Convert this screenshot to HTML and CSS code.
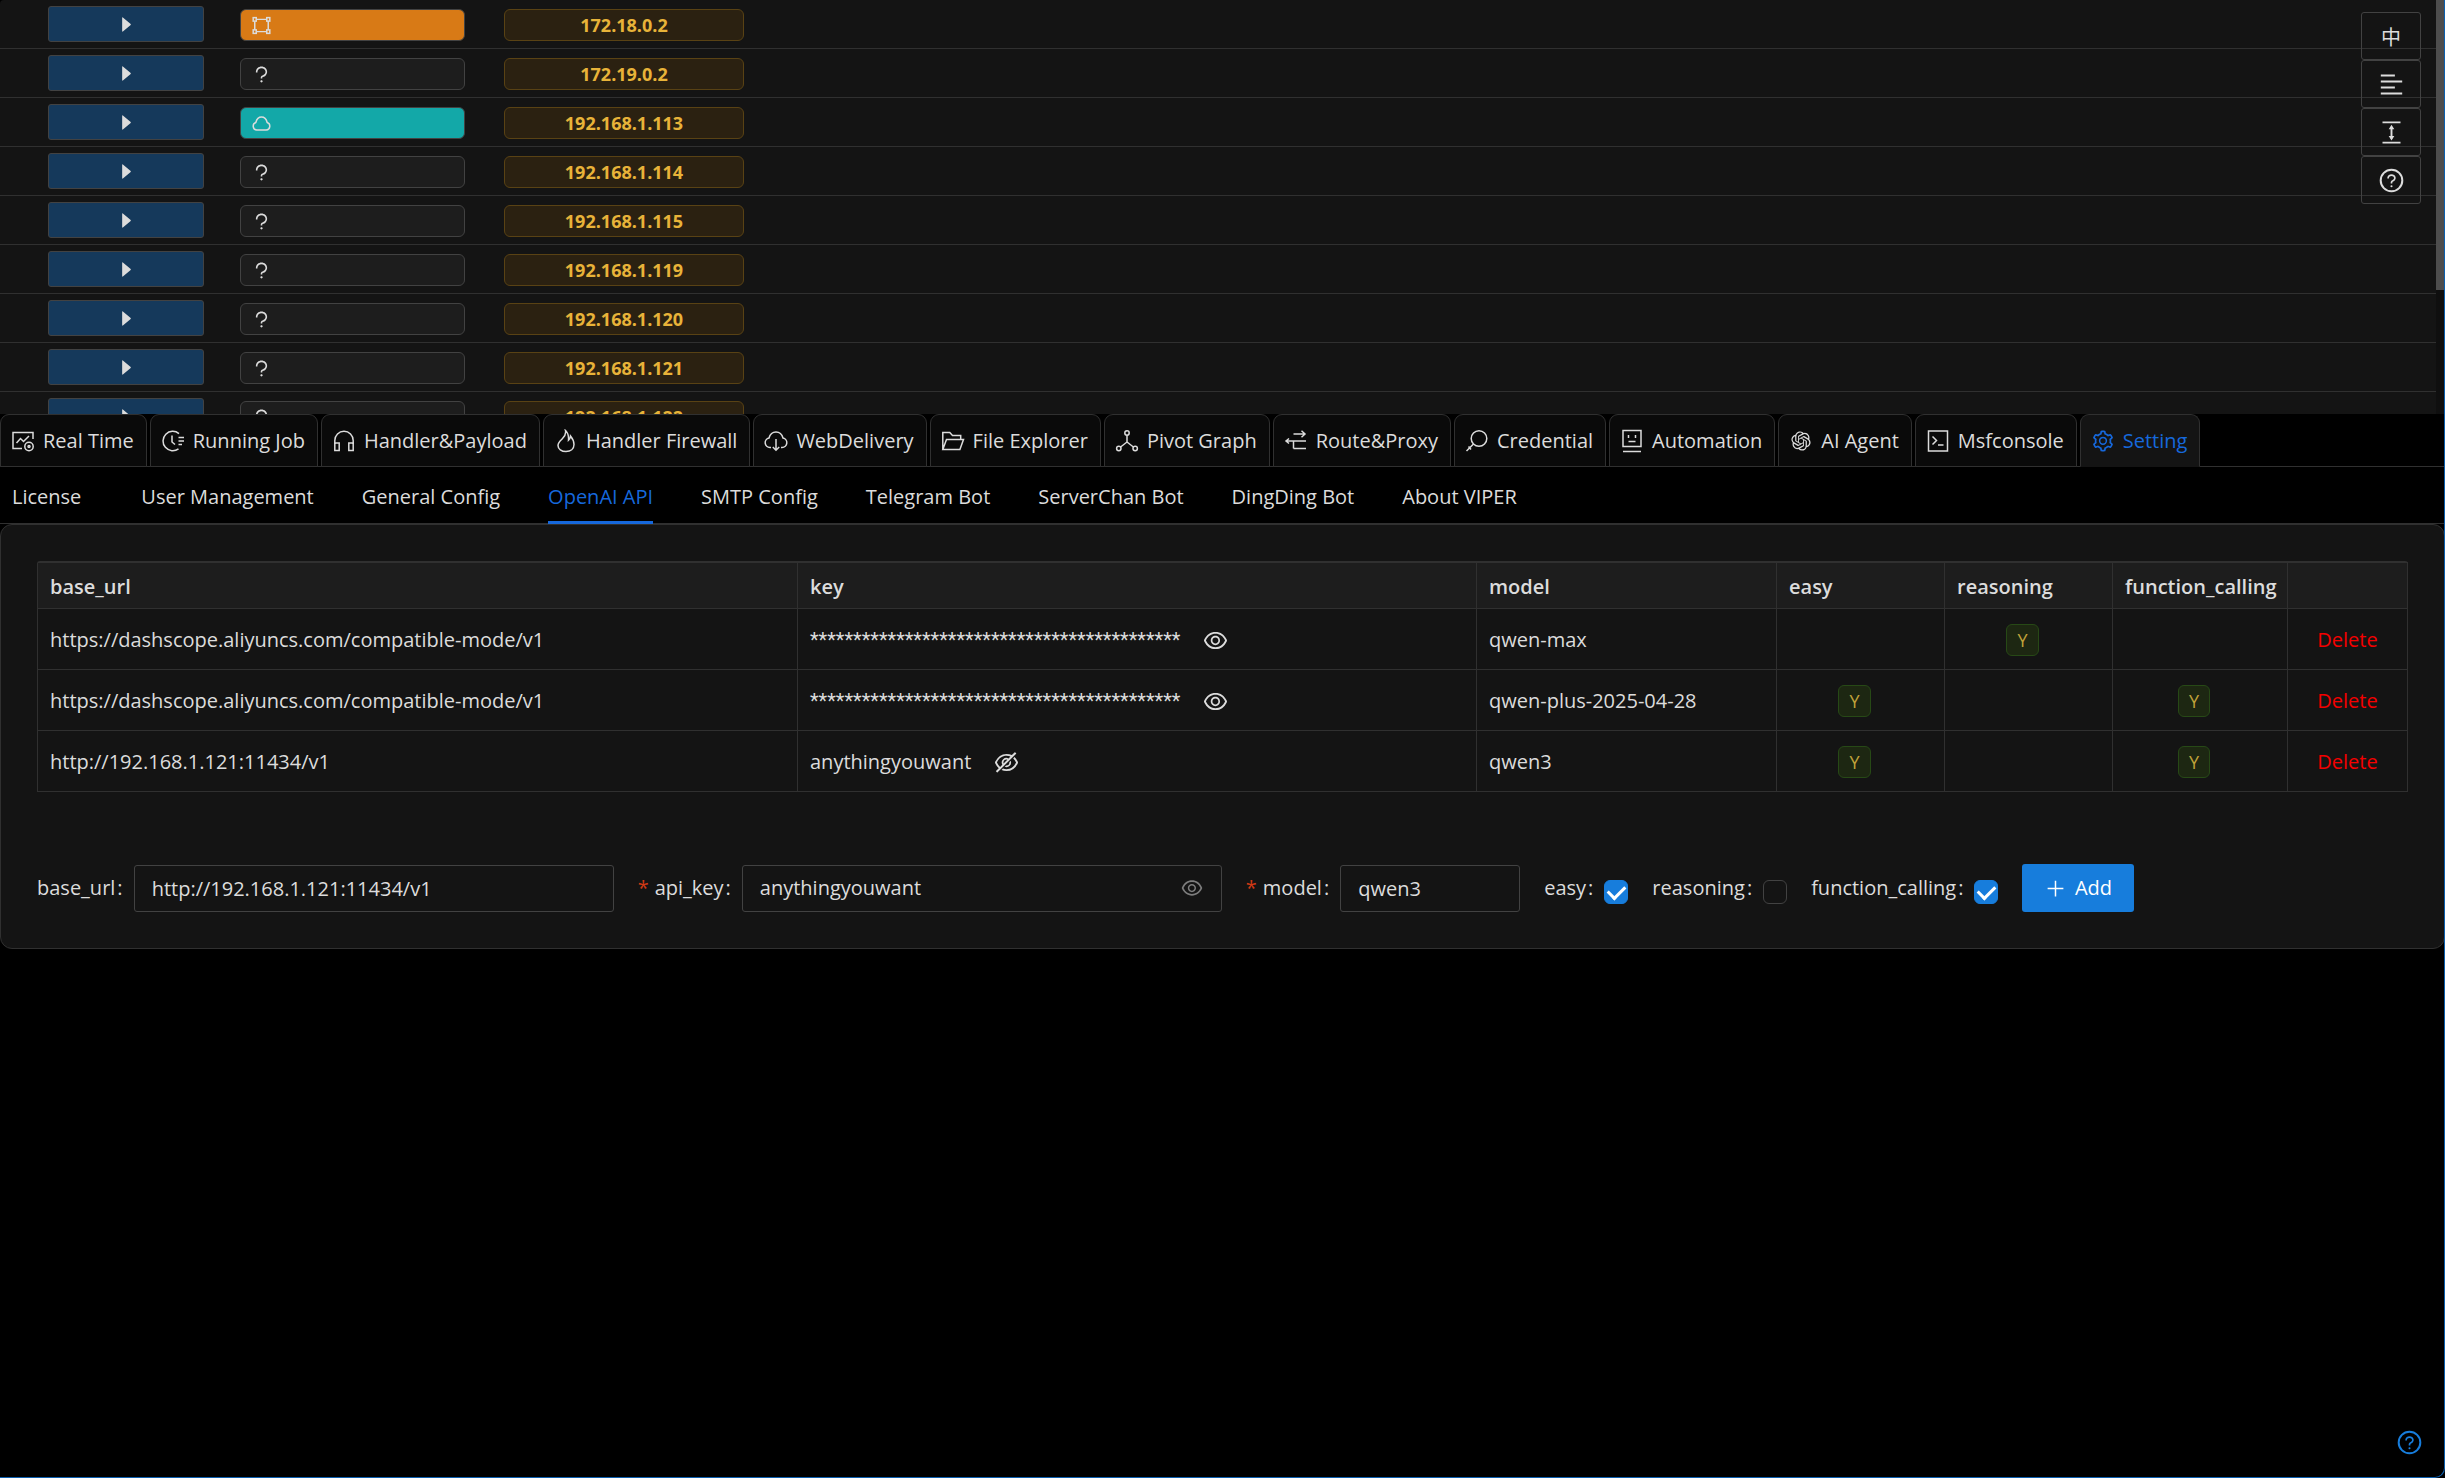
FILE: index.html
```html
<!DOCTYPE html>
<html lang="en">
<head>
<meta charset="utf-8">
<title>VIPER</title>
<link rel="stylesheet" href="styles.css">
</head>
<body>
<svg class="sprite" aria-hidden="true">
  <symbol id="i-caret" viewBox="0 0 1024 1024"><path fill="currentColor" stroke="none" d="M715.8 493.500L335 165.100c-14.200-12.200-35-1.200-35 18.500v656.800c0 19.700 20.800 30.700 35 18.500l380.800-328.400c10.900-9.400 10.900-27.600 0-37z"/></symbol>
  <symbol id="i-question" viewBox="0 0 1024 1024"><path fill="currentColor" stroke="none" d="M764 280.900c-14-30.600-33.900-58.100-59.300-81.600C653.100 151.400 584.600 125 512 125s-141.100 26.400-192.700 74.200c-25.400 23.600-45.300 51-59.300 81.700-14.600 32-22 65.900-22 100.900v27c0 6.200 5 11.200 11.200 11.200h54c6.200 0 11.200-5 11.200-11.200v-27c0-99.500 88.600-180.400 197.600-180.400s197.600 80.900 197.600 180.400c0 40.800-14.500 79.200-42 111.200-27.200 31.700-65.600 54.400-108.100 64-24.300 5.500-46.200 19.200-61.700 38.800a110.850 110.850 0 00-23.900 68.600v31.400c0 6.200 5 11.200 11.200 11.200h54c6.200 0 11.200-5 11.200-11.200v-31.400c0-15.700 10.900-29.500 26-32.900 58.400-13.200 111.400-44.700 149.300-88.700 19.100-22.300 34-47.100 44.300-74 10.700-27.900 16.100-57.200 16.100-87 0-35-7.400-69-22-100.900zM512 787c-30.900 0-56 25.100-56 56s25.100 56 56 56 56-25.100 56-56-25.100-56-56-56z"/></symbol>
  <symbol id="i-help" viewBox="0 0 1024 1024"><circle cx="512" cy="512" r="410" stroke-width="76"/><path fill="currentColor" stroke="none" d="M623.600 316.700C593.600 290.400 554 276 512 276s-81.600 14.500-111.600 40.700C369.200 344 352 380.700 352 420v7.600c0 4.400 3.600 8 8 8h48c4.400 0 8-3.600 8-8V420c0-44.100 43.100-80 96-80s96 35.900 96 80c0 31.100-22 59.600-56.100 72.700-21.200 8.100-39.200 22.300-52.100 40.900-13.100 19-19.900 41.800-19.900 64.900V620c0 4.400 3.600 8 8 8h48c4.400 0 8-3.600 8-8v-22.700a48.300 48.300 0 0130.900-44.800c59-22.700 97.100-74.700 97.100-132.500.1-39.300-17.100-76-48.300-103.300zM472 732a40 40 0 1080 0 40 40 0 10-80 0z"/></symbol>
  <symbol id="i-eye" viewBox="0 0 1024 1024"><path fill="currentColor" stroke="none" d="M942.200 486.200C847.400 286.500 704.100 186 512 186c-192.200 0-335.400 100.500-430.200 300.300a60.300 60.300 0 000 51.500C176.600 737.500 319.900 838 512 838c192.200 0 335.400-100.500 430.200-300.300 7.700-16.200 7.700-35 0-51.500zM512 766c-161.300 0-279.400-81.800-362.700-254C232.600 339.800 350.700 258 512 258c161.300 0 279.400 81.800 362.700 254C791.500 684.200 673.400 766 512 766zm-4-430c-97.200 0-176 78.800-176 176s78.800 176 176 176 176-78.800 176-176-78.800-176-176-176zm0 288c-61.900 0-112-50.100-112-112s50.100-112 112-112 112 50.100 112 112-50.100 112-112 112z"/></symbol>
  <symbol id="i-eye-off" viewBox="0 0 1024 1024"><path fill="currentColor" stroke="none" d="M942.200 486.200Q889.470 375.110 816.700 305l-50.880 50.880C807.310 395.530 843.450 447.400 874.700 512 791.500 684.200 673.400 766 512 766q-72.670 0-133.870-22.380L323 798.750Q408 838 512 838q288.300 0 430.200-300.300a60.290 60.290 0 000-51.500zm-63.570-320.640L836 122.880a8 8 0 00-11.320 0L715.310 232.200Q624.860 186 512 186q-288.300 0-430.200 300.300a60.300 60.300 0 000 51.500q56.690 119.400 136.500 191.410L112.480 835a8 8 0 000 11.310L155.170 889a8 8 0 0011.310 0l712.150-712.120a8 8 0 000-11.320zM149.300 512C232.600 339.800 350.700 258 512 258c54.540 0 104.130 9.360 149.120 28.390l-70.300 70.300a176 176 0 00-238.130 238.130l-83.420 83.420C223.100 637.490 183.300 582.280 149.300 512zm246.700 0a112.110 112.110 0 01146.200-106.690L401.310 546.200A112 112 0 01396 512z"/><path fill="currentColor" stroke="none" d="M508 624c-3.460 0-6.870-.16-10.250-.47l-52.820 52.820a176.090 176.090 0 00227.420-227.420l-52.820 52.820c.31 3.380.47 6.790.47 10.250a111.940 111.940 0 01-112 112z"/></symbol>
  <symbol id="i-gear" viewBox="0 0 1024 1024"><path fill="currentColor" stroke="none" d="M924.800 625.700l-65.500-56c3.100-19 4.700-38.400 4.700-57.800s-1.600-38.800-4.700-57.800l65.500-56a32.030 32.030 0 009.300-35.200l-.9-2.600a443.740 443.740 0 00-79.700-137.900l-1.800-2.100a32.120 32.120 0 00-35.100-9.500l-81.300 28.900c-30-24.600-63.500-44-99.700-57.600l-15.700-85a32.050 32.050 0 00-25.800-25.700l-2.700-.5c-52.100-9.400-106.900-9.400-159 0l-2.700.5a32.050 32.050 0 00-25.800 25.700l-15.800 85.400a351.860 351.860 0 00-99 57.400l-81.900-29.100a32 32 0 00-35.100 9.500l-1.800 2.100a446.020 446.020 0 00-79.700 137.900l-.9 2.600c-4.500 12.500-.8 26.500 9.300 35.200l66.300 56.600c-3.100 18.800-4.600 38-4.600 57.100 0 19.200 1.500 38.400 4.600 57.100L99 625.500a32.030 32.030 0 00-9.300 35.200l.9 2.600c18.100 50.400 44.900 96.900 79.700 137.900l1.800 2.100a32.120 32.120 0 0035.100 9.500l81.900-29.100c29.800 24.500 63.100 43.900 99 57.400l15.800 85.400a32.050 32.050 0 0025.800 25.700l2.700.5a449.400 449.400 0 00159 0l2.700-.5a32.050 32.050 0 0025.800-25.700l15.700-85a350 350 0 0099.700-57.600l81.300 28.900a32 32 0 0035.100-9.500l1.800-2.100c34.800-41.100 61.600-87.500 79.700-137.900l.9-2.600c4.500-12.300.8-26.300-9.300-35zM788.300 465.900c2.500 15.100 3.800 30.600 3.800 46.100s-1.300 31-3.800 46.100l-6.600 40.100 74.700 63.900a370.030 370.030 0 01-42.600 73.600L721 702.800l-31.400 25.800c-23.900 19.600-50.500 35-79.300 45.800l-38.100 14.300-17.900 97a377.500 377.500 0 01-85 0l-17.900-97.200-37.800-14.500c-28.500-10.800-55-26.200-78.700-45.700l-31.400-25.900-93.400 33.200c-17-22.900-31.200-47.600-42.600-73.600l75.500-64.500-6.500-40c-2.400-14.900-3.700-30.300-3.700-45.500 0-15.300 1.200-30.600 3.700-45.500l6.500-40-75.500-64.500c11.300-26.100 25.600-50.700 42.600-73.600l93.400 33.200 31.400-25.900c23.700-19.500 50.200-34.900 78.700-45.700l37.900-14.300 17.900-97.200c28.100-3.200 56.800-3.200 85 0l17.900 97 38.100 14.300c28.700 10.800 55.400 26.200 79.300 45.800l31.400 25.800 92.800-32.900c17 22.900 31.200 47.600 42.600 73.600L781.800 426l6.500 39.900z"/><circle cx="512" cy="502" r="144" stroke-width="64"/></symbol>
  <symbol id="i-openai" viewBox="-3 -3 30 30"><path fill="currentColor" stroke="none" d="M22.2819 9.8211a5.9847 5.9847 0 0 0-.5157-4.9108 6.0462 6.0462 0 0 0-6.5098-2.9A6.0651 6.0651 0 0 0 4.9807 4.1818a5.9847 5.9847 0 0 0-3.9977 2.9 6.0462 6.0462 0 0 0 .7427 7.0966 5.98 5.98 0 0 0 .511 4.9107 6.051 6.051 0 0 0 6.5146 2.9001A5.9847 5.9847 0 0 0 13.2599 24a6.0557 6.0557 0 0 0 5.7718-4.2058 5.9894 5.9894 0 0 0 3.9977-2.9001 6.0557 6.0557 0 0 0-.7475-7.0729zm-9.022 12.6081a4.4755 4.4755 0 0 1-2.8764-1.0408l.1419-.0804 4.7783-2.7582a.7948.7948 0 0 0 .3927-.6813v-6.7369l2.02 1.1686a.071.071 0 0 1 .038.052v5.5826a4.504 4.504 0 0 1-4.4945 4.4944zm-9.6607-4.1254a4.4708 4.4708 0 0 1-.5346-3.0137l.142.0852 4.783 2.7582a.7712.7712 0 0 0 .7806 0l5.8428-3.3685v2.3324a.0804.0804 0 0 1-.0332.0615L9.74 19.9502a4.4992 4.4992 0 0 1-6.1408-1.6464zM2.3408 7.8956a4.485 4.485 0 0 1 2.3655-1.9728V11.6a.7664.7664 0 0 0 .3879.6765l5.8144 3.3543-2.0201 1.1685a.0757.0757 0 0 1-.071 0l-4.8303-2.7865A4.504 4.504 0 0 1 2.3408 7.872zm16.5963 3.8558L13.1038 8.364 15.1192 7.2a.0757.0757 0 0 1 .071 0l4.8303 2.7913a4.4944 4.4944 0 0 1-.6765 8.1042v-5.6772a.79.79 0 0 0-.407-.667zm2.0107-3.0231l-.142-.0852-4.7735-2.7818a.7759.7759 0 0 0-.7854 0L9.409 9.2297V6.8974a.0662.0662 0 0 1 .0284-.0615l4.8303-2.7866a4.4992 4.4992 0 0 1 6.6802 4.66zM8.3065 12.863l-2.02-1.1638a.0804.0804 0 0 1-.038-.0567V6.0742a4.4992 4.4992 0 0 1 7.3757-3.4537l-.142.0805L8.704 5.459a.7948.7948 0 0 0-.3927.6813zm1.0976-2.3654l2.602-1.4998 2.6069 1.4998v2.9994l-2.5974 1.4997-2.6067-1.4997Z"/></symbol>
  <symbol id="i-gateway" viewBox="0 0 24 24"><rect x="2.500" y="3" width="3.500" height="4"/><rect x="18" y="3" width="3.500" height="4"/><rect x="2.500" y="17" width="3.500" height="4"/><rect x="18" y="17" width="3.500" height="4"/><path d="M6 5h12M6 19h12M4.300 7v10M19.700 7v10"/></symbol>
  <symbol id="i-cloud" viewBox="0 0 24 24"><path d="M6.500 19.500a4.500 4.500 0 0 1-1-8.700C6.500 7 9 4.600 12 4.600s5.500 2.400 6.500 6.200a4.500 4.500 0 0 1-1 8.700z"/></symbol>
  <symbol id="i-fund" viewBox="0 0 24 24"><path d="M11 19.500H2V3.500h20V10M5.500 14l4-4.500 3 3L18 7"/><circle cx="18" cy="17.500" r="4.200"/><circle cx="18" cy="17.500" r="1"/></symbol>
  <symbol id="i-clock" viewBox="0 0 24 24"><path d="M17.500 19.800A9.700 9.700 0 1 1 18 4.600M11 6.500v6.500l3 2.500M17.500 8.500H23M17.500 12H23M17.500 15.500H21"/></symbol>
  <symbol id="i-headset" viewBox="0 0 24 24"><path d="M2.800 15v-3.500a9.200 9.200 0 0 1 18.400 0V15"/><rect x="2.800" y="14" width="4.400" height="7.500"/><rect x="16.800" y="14" width="4.400" height="7.500"/></symbol>
  <symbol id="i-fire" viewBox="0 0 24 24"><path d="M11.500 1.500c.8 3.500-.5 5.500-3 8C6 12 4 13.500 4 16.500 4 20 7.500 22.500 12 22.500s8-2.500 8-7c0-3.500-1.500-6-3.500-8.500-.2 2-.8 3.200-2 4.200.3-4-.5-7.500-3-9.700z"/></symbol>
  <symbol id="i-cloud-down" viewBox="0 0 24 24"><path d="M7 18.500H6A4.800 4.800 0 0 1 5 9c1-3.600 3.700-6 7-6s6 2.400 7 6a4.800 4.800 0 0 1-1 9.500h-1M12 10v11M8.800 18l3.200 3.200 3.200-3.200"/></symbol>
  <symbol id="i-folder" viewBox="0 0 24 24"><path d="M1.800 20.500v-17h7l2.700 3h8.200v4M1.800 20.500l3.700-10h17l-3.600 10z"/></symbol>
  <symbol id="i-graph" viewBox="0 0 24 24"><circle cx="12" cy="4" r="2.200"/><circle cx="3.800" cy="19.500" r="2.200"/><circle cx="20.200" cy="19.500" r="2.200"/><path d="M12 6.200V13l-6.400 5M12 13l6.400 5"/></symbol>
  <symbol id="i-route" viewBox="0 0 24 24"><path d="M9.500 5H21M17.500 1.800 21 5l-3.500 3.200M2.500 12H22M9.500 19.500H22M9.500 12v7.500M5 9.500 2 12l3 2.500"/></symbol>
  <symbol id="i-key" viewBox="0 0 24 24"><circle cx="14" cy="9.500" r="7.800"/><path d="M8.500 15 1.500 22M3.500 17.500l2.500 3"/></symbol>
  <symbol id="i-robot" viewBox="0 0 24 24"><path d="M3 1.500h18v16H3zM3 22.500h18M8.500 12.500h7M8.500 6v3M15.500 6v3"/></symbol>
  <symbol id="i-console" viewBox="0 0 24 24"><path d="M2.500 2h19v20h-19zM6.500 7.500l4 4-4 4M12 16h5.500"/></symbol>
  <symbol id="i-lines" viewBox="0 0 24 24"><path d="M2.500 4h12.500M2.500 9.300h19M2.500 14.700h12.500M2.500 20h19"/></symbol>
  <symbol id="i-height" viewBox="0 0 24 24"><path d="M4 3h16M4 21h16M12 7v10"/><path fill="currentColor" stroke="none" d="M12 5 14.500 9h-5zM12 19 14.500 15h-5z"/></symbol>
  <symbol id="i-plus" viewBox="0 0 24 24"><path d="M12 3v18M3 12h18"/></symbol>
</svg>

<div class="app">
  <section class="hosts">
    <table class="hosts__table">
      <colgroup><col class="c-action"><col class="c-kind"><col class="c-ip"><col></colgroup>
      <tbody>
        <tr><td><button class="run" aria-label="Run"><svg><use href="#i-caret"/></svg></button></td><td><span class="kind kind--gateway"><svg><use href="#i-gateway"/></svg></span></td><td><span class="ip">172.18.0.2</span></td><td></td></tr>
        <tr><td><button class="run" aria-label="Run"><svg><use href="#i-caret"/></svg></button></td><td><span class="kind"><svg><use href="#i-question"/></svg></span></td><td><span class="ip">172.19.0.2</span></td><td></td></tr>
        <tr><td><button class="run" aria-label="Run"><svg><use href="#i-caret"/></svg></button></td><td><span class="kind kind--cloud"><svg><use href="#i-cloud"/></svg></span></td><td><span class="ip">192.168.1.113</span></td><td></td></tr>
        <tr><td><button class="run" aria-label="Run"><svg><use href="#i-caret"/></svg></button></td><td><span class="kind"><svg><use href="#i-question"/></svg></span></td><td><span class="ip">192.168.1.114</span></td><td></td></tr>
        <tr><td><button class="run" aria-label="Run"><svg><use href="#i-caret"/></svg></button></td><td><span class="kind"><svg><use href="#i-question"/></svg></span></td><td><span class="ip">192.168.1.115</span></td><td></td></tr>
        <tr><td><button class="run" aria-label="Run"><svg><use href="#i-caret"/></svg></button></td><td><span class="kind"><svg><use href="#i-question"/></svg></span></td><td><span class="ip">192.168.1.119</span></td><td></td></tr>
        <tr><td><button class="run" aria-label="Run"><svg><use href="#i-caret"/></svg></button></td><td><span class="kind"><svg><use href="#i-question"/></svg></span></td><td><span class="ip">192.168.1.120</span></td><td></td></tr>
        <tr><td><button class="run" aria-label="Run"><svg><use href="#i-caret"/></svg></button></td><td><span class="kind"><svg><use href="#i-question"/></svg></span></td><td><span class="ip">192.168.1.121</span></td><td></td></tr>
        <tr><td><button class="run" aria-label="Run"><svg><use href="#i-caret"/></svg></button></td><td><span class="kind"><svg><use href="#i-question"/></svg></span></td><td><span class="ip">192.168.1.122</span></td><td></td></tr>
      </tbody>
    </table>
    <div class="scrollbar"><div class="scrollbar__thumb"></div></div>
    <div class="tools">
      <button class="tool tool--text">中</button>
      <button class="tool" aria-label="Collapse"><svg><use href="#i-lines"/></svg></button>
      <button class="tool" aria-label="Height"><svg><use href="#i-height"/></svg></button>
      <button class="tool" aria-label="Help"><svg><use href="#i-help"/></svg></button>
    </div>
  </section>

  <nav class="tabs">
    <button class="tab"><svg><use href="#i-fund"/></svg>Real Time</button>
    <button class="tab"><svg><use href="#i-clock"/></svg>Running Job</button>
    <button class="tab"><svg><use href="#i-headset"/></svg>Handler&amp;Payload</button>
    <button class="tab"><svg><use href="#i-fire"/></svg>Handler Firewall</button>
    <button class="tab"><svg><use href="#i-cloud-down"/></svg>WebDelivery</button>
    <button class="tab"><svg><use href="#i-folder"/></svg>File Explorer</button>
    <button class="tab"><svg><use href="#i-graph"/></svg>Pivot Graph</button>
    <button class="tab"><svg><use href="#i-route"/></svg>Route&amp;Proxy</button>
    <button class="tab"><svg><use href="#i-key"/></svg>Credential</button>
    <button class="tab"><svg><use href="#i-robot"/></svg>Automation</button>
    <button class="tab"><svg><use href="#i-openai"/></svg>AI Agent</button>
    <button class="tab"><svg><use href="#i-console"/></svg>Msfconsole</button>
    <button class="tab tab--active"><svg><use href="#i-gear"/></svg>Setting</button>
  </nav>

  <nav class="subtabs">
    <button class="subtab subtab--first">License</button>
    <button class="subtab">User Management</button>
    <button class="subtab">General Config</button>
    <button class="subtab subtab--active">OpenAI API</button>
    <button class="subtab">SMTP Config</button>
    <button class="subtab">Telegram Bot</button>
    <button class="subtab">ServerChan Bot</button>
    <button class="subtab">DingDing Bot</button>
    <button class="subtab">About VIPER</button>
  </nav>

  <main class="panel">
    <table class="models">
      <colgroup><col class="m-url"><col class="m-key"><col class="m-model"><col class="m-flag"><col class="m-flag"><col class="m-func"><col class="m-del"></colgroup>
      <thead>
        <tr><th>base_url</th><th>key</th><th>model</th><th>easy</th><th>reasoning</th><th>function_calling</th><th></th></tr>
      </thead>
      <tbody>
        <tr>
          <td>https://dashscope.aliyuncs.com/compatible-mode/v1</td>
          <td><div class="secret"><span class="mask">*******************************************</span><button class="icon-btn" aria-label="Show key"><svg><use href="#i-eye"/></svg></button></div></td>
          <td>qwen-max</td><td></td><td class="flag"><span class="yes">Y</span></td><td></td>
          <td class="act"><button class="delete">Delete</button></td>
        </tr>
        <tr>
          <td>https://dashscope.aliyuncs.com/compatible-mode/v1</td>
          <td><div class="secret"><span class="mask">*******************************************</span><button class="icon-btn" aria-label="Show key"><svg><use href="#i-eye"/></svg></button></div></td>
          <td>qwen-plus-2025-04-28</td><td class="flag"><span class="yes">Y</span></td><td></td><td class="flag"><span class="yes">Y</span></td>
          <td class="act"><button class="delete">Delete</button></td>
        </tr>
        <tr>
          <td>http://192.168.1.121:11434/v1</td>
          <td><div class="secret"><span>anythingyouwant</span><button class="icon-btn" aria-label="Hide key"><svg><use href="#i-eye-off"/></svg></button></div></td>
          <td>qwen3</td><td class="flag"><span class="yes">Y</span></td><td></td><td class="flag"><span class="yes">Y</span></td>
          <td class="act"><button class="delete">Delete</button></td>
        </tr>
      </tbody>
    </table>

    <form class="form">
      <div class="field"><label for="base_url">base_url<span class="colon">:</span></label><input class="text text--wide" id="base_url" type="text" value="http://192.168.1.121:11434/v1"></div>
      <div class="field"><label for="api_key"><span class="star">*</span>api_key<span class="colon">:</span></label>
        <div class="text text--wide text--affix"><input id="api_key" type="text" value="anythingyouwant"><button type="button" class="reveal" aria-label="Toggle visibility"><svg><use href="#i-eye"/></svg></button></div></div>
      <div class="field"><label for="model"><span class="star">*</span>model<span class="colon">:</span></label><input class="text text--short" id="model" type="text" value="qwen3"></div>
      <div class="field"><label for="easy">easy<span class="colon">:</span></label><input class="check" id="easy" type="checkbox" checked></div>
      <div class="field"><label for="reasoning">reasoning<span class="colon">:</span></label><input class="check" id="reasoning" type="checkbox"></div>
      <div class="field"><label for="fc">function_calling<span class="colon">:</span></label><input class="check" id="fc" type="checkbox" checked></div>
      <button type="button" class="add"><svg><use href="#i-plus"/></svg>Add</button>
    </form>
  </main>

  <button class="help" aria-label="Help"><svg><use href="#i-help"/></svg></button>
</div>
</body>
</html>
```
FILE: styles.css
```css
* { box-sizing: border-box; }

body {
  margin: 0;
  background: #000;
  color: #dcdcdc;
  font: 20px/30px "Open Sans", "Noto Sans", "Noto Sans CJK SC", sans-serif;
}

button, input {
  font: inherit;
  color: inherit;
  margin: 0;
  padding: 0;
  border: 0;
  background: none;
}

button { cursor: pointer; }

svg {
  display: block;
  width: 21px;
  height: 21px;
  flex: none;
  fill: none;
  stroke: currentColor;
  stroke-width: 1.7;
}

.sprite { position: absolute; width: 0; height: 0; }

.app { min-height: 100vh; }

/* Window edge, drawn over the content */
.app::after {
  content: "";
  position: fixed;
  inset: 0;
  border: solid #0c5fae;
  border-width: 0 1px 1px 0;
  border-bottom-right-radius: 10px;
  pointer-events: none;
}

/* Hosts */
.hosts {
  position: relative;
  height: 414px;
  overflow: hidden;
  background: #141414;
  border-top-left-radius: 4px;
}

.hosts__table {
  width: 100%;
  table-layout: fixed;
  border-collapse: separate;
  border-spacing: 0;
}

.hosts__table td {
  height: 49px;
  padding: 0;
  border-bottom: 1px solid #303030;
  vertical-align: middle;
}

.c-action { width: 240px; }
.c-kind { width: 264px; }
.c-ip { width: 240px; }

.run {
  display: flex;
  align-items: center;
  justify-content: center;
  width: 156px;
  height: 36px;
  margin-left: 48px;
  border: 1px solid #424242;
  border-radius: 3px;
  background: #15395b;
}

.kind, .ip {
  display: flex;
  align-items: center;
  height: 32px;
  margin-top: 2px;
  border: 1px solid #424242;
  border-radius: 6px;
  background: #1d1d1d;
}

.kind { width: 225px; padding-left: 10px; }
.kind--gateway { background: #d87a16; }
.kind--cloud { background: #13a8a8; }

.ip {
  justify-content: center;
  border-color: #594214;
  background: #2b2111;
  color: #e8b339;
  font-size: 18px;
  font-weight: 700;
}

.scrollbar {
  position: absolute;
  top: 0;
  right: 0;
  bottom: 0;
  width: 9px;
  background: #0f0f0f;
}

.scrollbar__thumb { height: 70%; background: #4d4d4d; }

.tools {
  position: absolute;
  top: 12px;
  right: 24px;
  display: flex;
  flex-direction: column;
}

.tool {
  display: flex;
  align-items: center;
  justify-content: center;
  width: 60px;
  height: 48px;
  border: 1px solid #424242;
  border-radius: 3px;
}

.tool svg { width: 27px; height: 27px; }
.tool--text { padding-top: 4px; }

/* Main tabs */
.tabs {
  display: flex;
  gap: 3px;
  height: 53px;
  border-bottom: 1px solid #303030;
}

.tab {
  display: flex;
  align-items: center;
  gap: 8px;
  height: 53px;
  padding: 1px 12px 0 10px;
  border: 1px solid #303030;
  border-radius: 9px 9px 0 0;
  background: #0a0a0a;
  white-space: nowrap;
}

.tab svg { width: 24px; height: 24px; stroke-width: 1.5; }

.tab--active {
  border-bottom-color: #141414;
  background: #141414;
  color: #1668dc;
}

/* Sub tabs */
.subtabs {
  display: flex;
  gap: 48px;
  height: 57px;
  padding: 0 12px;
  border-bottom: 1px solid #303030;
}

.subtab {
  height: 57px;
  padding-top: 5px;
  border-bottom: 3px solid transparent;
  white-space: nowrap;
}

.subtab--first { margin-right: 12px; }
.subtab--active { border-bottom-color: #1668dc; color: #1668dc; }

/* Settings panel */
.panel {
  padding: 36px;
  border: 1px solid #303030;
  border-radius: 12px;
  background: #141414;
}

.models {
  width: 100%;
  table-layout: fixed;
  border-collapse: separate;
  border-spacing: 0;
  border-top: 1px solid #303030;
  border-left: 1px solid #303030;
  border-radius: 3px 3px 0 0;
}

.m-url { width: 760px; }
.m-model { width: 300px; }
.m-flag { width: 168px; }
.m-func { width: 175px; }
.m-del { width: 120px; }

.models th, .models td {
  height: 61px;
  padding: 2px 12px 0;
  border-right: 1px solid #303030;
  border-bottom: 1px solid #303030;
  text-align: left;
  white-space: nowrap;
}

.models th {
  height: 47px;
  border-top: 1px solid #303030;
  background: #1d1d1d;
  font-weight: 600;
}

.models .flag, .models .act { text-align: center; }

.secret { display: flex; align-items: center; gap: 22px; }
.mask { font-family: Roboto, sans-serif; }
.icon-btn svg { width: 27px; height: 27px; }

.yes {
  display: inline-block;
  height: 32px;
  margin-right: 12px;
  padding: 0 10px;
  border: 1px solid #274916;
  border-radius: 6px;
  background: #1d2712;
  color: #c0a23a;
  font-size: 18px;
  vertical-align: middle;
}

.delete { color: #f50000; }

/* Add form */
.form {
  display: flex;
  flex-wrap: wrap;
  align-items: center;
  gap: 24px;
  margin-top: 72px;
}

.field { display: flex; align-items: center; }
.colon { margin: 0 11px 0 2px; }
.star { margin-right: 6px; color: #d13a15; }

.text {
  height: 47px;
  padding: 0 17px;
  border: 1px solid #424242;
  border-radius: 3px;
}

.text--wide { width: 480px; }
.text--short { width: 180px; }
.text--affix { display: flex; align-items: center; }
.text--affix input { flex: 1; min-width: 0; outline: none; }
.reveal { color: #7d7d7d; }
.reveal svg { width: 24px; height: 24px; }

.check {
  display: grid;
  place-items: center;
  width: 24px;
  height: 24px;
  margin-top: 8px;
  border: 1px solid #424242;
  border-radius: 6px;
  appearance: none;
}

.check:checked { border-color: #177ddc; background: #177ddc; }

.check:checked::after {
  content: "";
  width: 8px;
  height: 14px;
  margin-bottom: 4px;
  border: solid #fff;
  border-width: 0 3px 3px 0;
  transform: rotate(45deg);
}

.add {
  display: flex;
  align-items: center;
  justify-content: center;
  gap: 9px;
  width: 112px;
  height: 48px;
  border-radius: 3px;
  background: #177ddc;
  color: #fff;
}

.help {
  position: fixed;
  right: 22px;
  bottom: 22px;
  color: #177ddc;
}

.help svg { width: 27px; height: 27px; }
```
